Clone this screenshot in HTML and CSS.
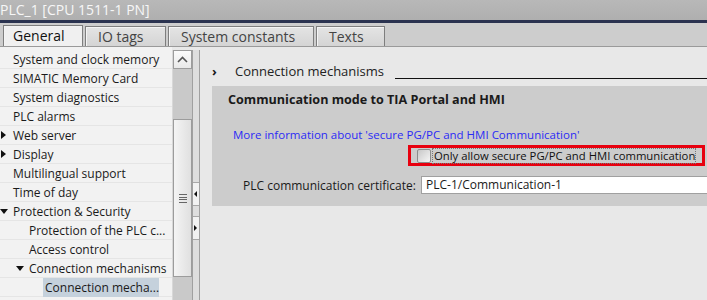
FILE: index.html
```html
<!DOCTYPE html>
<html lang="en">
<head>
  <meta charset="UTF-8">
  <title>PLC_1 Properties</title>
  <link rel="stylesheet" href="styles.css">
</head>
<body>
  <div class="titulo">PLC_1 [CPU 1511-1 PN]</div>

  <div class="abas">
    <div class="aba ativa">General</div>
    <div class="aba">IO tags</div>
    <div class="aba">System constants</div>
    <div class="aba">Texts</div>
  </div>

  <div class="principal">
    <div class="navegacao">
      <div class="lista">
        <div class="item">System and clock memory</div>
        <div class="item">SIMATIC Memory Card</div>
        <div class="item">System diagnostics</div>
        <div class="item">PLC alarms</div>
        <div class="item fechado">Web server</div>
        <div class="item fechado">Display</div>
        <div class="item">Multilingual support</div>
        <div class="item">Time of day</div>
        <div class="item aberto">Protection &amp; Security</div>
        <div class="item nivel1">Protection of the PLC c...</div>
        <div class="item nivel1">Access control</div>
        <div class="item nivel1 aberto">Connection mechanisms</div>
        <div class="item nivel2"><span class="selecionado">Connection mecha...</span></div>
      </div>

      <div class="rolagem">
        <div class="btn-subir">
          <svg width="11" height="7" viewBox="0 0 11 7"><path d="M1 6 L5.5 1.5 L10 6" fill="none" stroke="#555" stroke-width="1.6"/></svg>
        </div>
        <div class="trilho">
          <div class="polegar"><span class="grip"></span></div>
        </div>
      </div>

      <div class="divisor">
        <div class="seta esq"></div>
        <div class="seta dir"></div>
      </div>
    </div>

    <div class="conteudo">
      <div class="secao">
        <span class="marcador">&#8250;</span>
        <span class="secao-nome">Connection mechanisms</span>
        <span class="secao-linha"></span>
      </div>

      <div class="caixa">
        <div class="caixa-titulo">Communication mode to TIA Portal and HMI</div>
        <div class="link">More information about 'secure PG/PC and HMI Communication'</div>
        <div class="linha-check">
          <div class="destaque">
            <span class="check"></span>
            <span class="check-texto">Only allow secure PG/PC and HMI communication</span>
          </div>
        </div>
        <div class="campo">
          <span class="rotulo">PLC communication certificate:</span>
          <span class="entrada">PLC-1/Communication-1</span>
        </div>
      </div>
    </div>
  </div>
</body>
</html>
```

FILE: styles.css
```css
body {
  margin: 0;
  width: 707px;
  height: 300px;
  overflow: hidden;
  font-family: 'Open Sans', 'Noto Sans', sans-serif;
  font-size: 12px;
  color: #1a1a1a;
  background-color: #e8e8e8;
}

.titulo {
  height: 20px;
  line-height: 19px;
  background: linear-gradient(#b8b8b8, #afafaf);
  color: #f7f7f7;
  font-size: 14px;
  white-space: nowrap;
}

.abas {
  height: 23px;
  border-top: 3px solid #2b3350;
  border-bottom: 1px solid #9a9a9a;
  background-color: #cdcdcd;
  display: flex;
  align-items: flex-end;
  padding-left: 3px;
  gap: 2px;
}

.aba {
  box-sizing: border-box;
  height: 20px;
  line-height: 19px;
  border: 1px solid #7e7e7e;
  border-bottom: none;
  background: linear-gradient(#e4e4e4, #d4d4d4);
  font-size: 14px;
  color: #444;
  padding-left: 12px;
  box-shadow: inset 1px 1px 0 #f4f4f4;
  white-space: nowrap;
}

.aba:nth-child(1) { width: 80px; padding-left: 9px; }
.aba:nth-child(2) { width: 81px; }
.aba:nth-child(3) { width: 146px; }
.aba:nth-child(4) { width: 69px; }

.aba.ativa {
  background: #f0f0f0;
  color: #111;
  height: 21px;
}

.principal {
  display: flex;
  height: 253px;
}

.navegacao {
  display: flex;
  width: 200px;
  flex-shrink: 0;
}

.lista {
  width: 172px;
  background-color: #f2f2f2;
  padding-top: 3px;
  overflow: hidden;
}

.item {
  height: 18px;
  line-height: 19px;
  border-bottom: 1px solid #e5e5e5;
  padding-left: 13px;
  white-space: nowrap;
  position: relative;
}

.item.nivel1 { padding-left: 29px; }
.item.nivel2 { padding-left: 43px; }

.item.fechado::before {
  content: "";
  position: absolute;
  left: 1px;
  top: 5px;
  border-left: 5px solid #111;
  border-top: 4px solid transparent;
  border-bottom: 4px solid transparent;
}

.item.aberto::before {
  content: "";
  position: absolute;
  left: 0;
  top: 7px;
  border-top: 5px solid #111;
  border-left: 4px solid transparent;
  border-right: 4px solid transparent;
}

.item.nivel1.aberto::before { left: 16px; }

.selecionado {
  display: inline-block;
  background-color: #c5d1dc;
  padding: 0 2px;
  width: 112px;
}

.rolagem {
  width: 19px;
  margin-top: 3px;
  border-left: 1px solid #d8d8d8;
  background-color: #c9c9c9;
  display: flex;
  flex-direction: column;
}

.btn-subir {
  height: 17px;
  border: 1px solid #9c9c9c;
  background: linear-gradient(#fbfbfb, #e9e9e9);
  display: flex;
  align-items: center;
  justify-content: center;
}

.trilho {
  flex: 1;
  padding-top: 50px;
}

.polegar {
  height: 156px;
  border: 1px solid #9c9c9c;
  background: linear-gradient(90deg, #f4f4f4, #e0e0e0);
  display: flex;
  align-items: center;
  justify-content: center;
}

.grip {
  width: 8px;
  height: 7px;
  border-top: 1px solid #666;
  border-bottom: 1px solid #666;
  position: relative;
}

.grip::after {
  content: "";
  position: absolute;
  left: 0;
  right: 0;
  top: 2px;
  border-top: 1px solid #666;
  border-bottom: 1px solid #666;
  height: 1px;
}

.divisor {
  width: 6px;
  margin-top: 3px;
  border-left: 1px solid #a0a0a0;
  border-right: 1px solid #a0a0a0;
  background-color: #dedede;
  display: flex;
  flex-direction: column;
  padding-top: 132px;
}

.seta {
  height: 22px;
  border-top: 1px solid #a8a8a8;
  border-bottom: 1px solid #a8a8a8;
  background-color: #f2f2f2;
  position: relative;
  margin-bottom: 10px;
}

.seta::before {
  content: "";
  position: absolute;
  top: 8px;
  left: 1px;
  border-top: 3px solid transparent;
  border-bottom: 3px solid transparent;
}

.seta.esq::before { border-right: 3px solid #111; }
.seta.dir::before { border-left: 3px solid #111; }

.conteudo {
  flex: 1;
  background-color: #e8e8e8;
  padding: 9px 0 0 12px;
}

.secao {
  display: flex;
  align-items: flex-end;
  height: 24px;
  font-size: 13px;
}

.marcador {
  width: 23px;
  font-weight: bold;
  font-size: 13px;
  line-height: 18px;
}

.secao-nome {
  line-height: 18px;
  color: #222;
}

.secao-linha {
  flex: 1;
  border-bottom: 1px solid #111;
  margin: 0 0 1px 11px;
}

.caixa {
  margin-top: 6px;
  height: 120px;
  background-color: #cccccc;
  padding-left: 16px;
}

.caixa-titulo {
  font-weight: bold;
  font-size: 12.6px;
  padding-top: 5px;
  line-height: 18px;
}

.link {
  color: #2b2bf5;
  font-size: 11.5px;
  padding: 17px 0 0 5px;
  line-height: 18px;
}

.linha-check {
  display: flex;
  justify-content: flex-end;
  margin-top: 1px;
  padding-right: 2px;
}

.destaque {
  box-sizing: border-box;
  border: 3px solid #e8000f;
  height: 21px;
  width: 297px;
  display: flex;
  align-items: center;
  padding-left: 6px;
}

.check {
  box-sizing: border-box;
  width: 14px;
  height: 14px;
  border: 1px solid #8c8c8c;
  border-radius: 2px;
  background: linear-gradient(135deg, #c8c8c8, #f6f6f6);
  margin-right: 2px;
}

.check-texto {
  outline: 1px dotted #777;
  font-size: 11.3px;
  line-height: 14px;
  padding-left: 1px;
  white-space: nowrap;
  color: #111;
}

.campo {
  display: flex;
  align-items: center;
  margin-top: 10px;
  padding-left: 15px;
}

.rotulo {
  width: 178px;
}

.entrada {
  flex: 1;
  height: 16px;
  line-height: 16px;
  background-color: #fff;
  border: 1px solid #a0a0a0;
  border-right: none;
  padding-left: 4px;
}
```
